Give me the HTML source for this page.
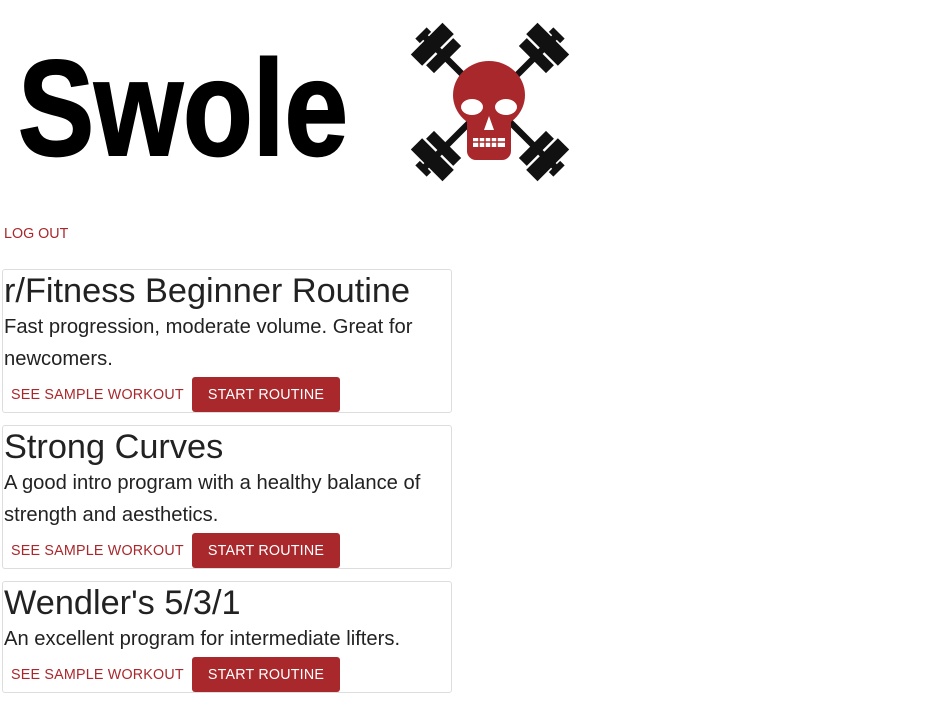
<!DOCTYPE html>
<html><head><meta charset="utf-8"><style>
body{margin:0;background:#fff;font-family:"Liberation Sans",Helvetica,Arial,sans-serif;color:#222;}
.logo{position:absolute;left:0;top:0;}
.logout{position:absolute;left:4px;top:226px;font-size:14.3px;color:#a8282c;}
.card{position:absolute;left:2px;width:448px;border:1px solid #ddd;border-radius:3px;}
.card h2{margin:0;font-weight:normal;font-size:34.3px;line-height:40px;padding-left:1px;padding-top:1px;color:#222}
.card p{margin:0;font-size:20.2px;line-height:32px;padding-left:1px;color:#222}
.btns{position:relative;height:35px;margin-top:2px;}
.see{position:absolute;left:8px;top:10px;font-size:14.3px;color:#a8282c;letter-spacing:.2px}
.start{position:absolute;left:189px;top:0;width:148px;height:35px;background:#a8282c;color:#fff;border-radius:3px;font-size:14.3px;text-align:center;line-height:36px;letter-spacing:.2px}
</style></head><body>
<svg class="logo" width="590" height="200" viewBox="0 0 590 200">
<text x="18" y="155" font-family="Liberation Sans" font-weight="bold" font-size="136" textLength="330" lengthAdjust="spacingAndGlyphs" stroke="#000" stroke-width="2">Swole</text>
<g fill="#111" transform="translate(490 102) scale(0.8) translate(-490 -102)">
 <g transform="rotate(45 490 102)">
  <rect x="375" y="98" width="230" height="8"/>
  <rect x="378" y="74" width="20" height="56"/><rect x="401" y="78" width="14" height="48"/>
  <rect x="582" y="74" width="20" height="56"/><rect x="565" y="78" width="14" height="48"/>
  <rect x="368" y="92" width="8" height="20"/><rect x="604" y="92" width="8" height="20"/>
 </g>
 <g transform="rotate(-45 490 102)">
  <rect x="375" y="98" width="230" height="8"/>
  <rect x="378" y="74" width="20" height="56"/><rect x="401" y="78" width="14" height="48"/>
  <rect x="582" y="74" width="20" height="56"/><rect x="565" y="78" width="14" height="48"/>
  <rect x="368" y="92" width="8" height="20"/><rect x="604" y="92" width="8" height="20"/>
 </g>
</g>
<g fill="#a8282c">
 <ellipse cx="489" cy="95" rx="36" ry="34"/>
 <rect x="467" y="110" width="44" height="50" rx="9"/>
</g>
<g fill="#fff">
 <ellipse cx="472" cy="107" rx="11" ry="8"/><ellipse cx="506" cy="107" rx="11" ry="8"/>
 <path d="M489 116 l-5 14 h10z"/>
 <rect x="473" y="138" width="32" height="9"/>
</g>
<g stroke="#a8282c" stroke-width="1.5">
 <line x1="479" y1="138" x2="479" y2="147"/><line x1="485" y1="138" x2="485" y2="147"/><line x1="491" y1="138" x2="491" y2="147"/><line x1="497" y1="138" x2="497" y2="147"/><line x1="473" y1="142" x2="505" y2="142"/>
</g>
</svg>
<div class="logout">LOG OUT</div>
<div class="card" style="top:269px;height:142px">
<h2>r/Fitness Beginner Routine</h2>
<p>Fast progression, moderate volume. Great for newcomers.</p>
<div class="btns"><span class="see">SEE SAMPLE WORKOUT</span><span class="start">START ROUTINE</span></div>
</div>
<div class="card" style="top:425px;height:142px">
<h2>Strong Curves</h2>
<p>A good intro program with a healthy balance of strength and aesthetics.</p>
<div class="btns"><span class="see">SEE SAMPLE WORKOUT</span><span class="start">START ROUTINE</span></div>
</div>
<div class="card" style="top:581px;height:110px">
<h2>Wendler's 5/3/1</h2>
<p>An excellent program for intermediate lifters.</p>
<div class="btns"><span class="see">SEE SAMPLE WORKOUT</span><span class="start">START ROUTINE</span></div>
</div>
</body></html>
